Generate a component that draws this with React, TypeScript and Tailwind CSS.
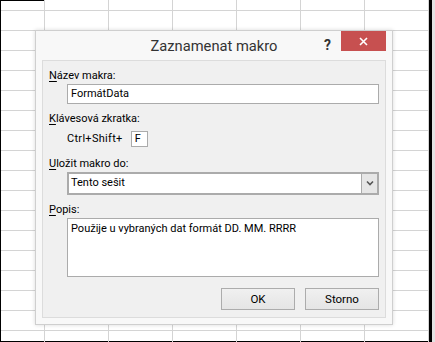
const COLS = 7
const ROWS = 17

/** Spreadsheet backdrop: a first narrow column, then 64px columns, 20px rows. */
function SheetGrid() {
  return (
    <div className="flex h-full">
      <div className="flex h-full border-l border-black">
        {Array.from({ length: COLS }).map((_, c) => (
          <div
            key={c}
            className={
              'flex h-full flex-col border-r border-[#d4d4d4] ' + (c === 0 ? 'w-[44px]' : 'w-[64px]')
            }
          >
            <div className={'h-[11px] shrink-0 border-b border-[#d4d4d4] ' + (c === 0 ? 'border-t border-t-black' : '')} />
            {Array.from({ length: ROWS - 1 }).map((_, r) => (
              <div key={r} className="h-[20px] shrink-0 border-b border-[#d4d4d4]" />
            ))}
            <div className="h-[10px] shrink-0" />
            <div className="h-[2px] shrink-0 bg-black" />
          </div>
        ))}
      </div>
      <div className="flex h-full">
        <div className="h-full w-[3px] bg-black" />
        <div className="h-full w-[3px] bg-[#e2e2e2]" />
      </div>
    </div>
  )
}

function Label({ hot, rest }: { hot: string; rest: string }) {
  return (
    <div className="h-[16px] leading-[16px] text-black">
      <span className="underline underline-offset-2">{hot}</span>
      {rest}
    </div>
  )
}

function Button({ children }: { children: React.ReactNode }) {
  return (
    <button
      type="button"
      className="h-[22px] w-[74px] border border-[#acacac] bg-gradient-to-b from-[#f0f0f0] to-[#e5e5e5] text-[11.5px] leading-[20px] text-black"
    >
      {children}
    </button>
  )
}

export default function App() {
  return (
    <div className="relative h-[342px] w-[435px] overflow-hidden bg-white font-['Roboto',sans-serif] text-[11px]">
      <SheetGrid />

      {/* Record macro dialog floating over the sheet */}
      <div className="absolute left-[35px] top-[30px] flex h-[295px] w-[358px] flex-col border border-[#cfcfcf] bg-[#f8f8f8] shadow-[0_0_4px_rgba(0,0,0,0.15)]">
        <div className="relative flex h-[29px] shrink-0 items-center justify-center">
          <span className="pt-[2px] text-[14.7px] text-[#333]">Zaznamenat makro</span>
          <span className="absolute left-[288px] top-[4px] text-[14px] font-bold text-[#333]">?</span>
          <div className="absolute right-[6px] top-0 flex h-[20px] w-[45px] items-center justify-center bg-[#c75050]">
            <svg width="9" height="9" viewBox="0 0 9 9">
              <path d="M1 1 8 8M8 1 1 8" stroke="#fff" strokeWidth="1.6" />
            </svg>
          </div>
        </div>

        <div className="mx-[6px] mb-[6px] flex flex-1 flex-col border border-[#dcdcdc] bg-[#f0f0f0] pl-[6px] pr-[6px] pt-[7px]">
          <Label hot="N" rest="ázev makra:" />
          <div className="ml-[18px] flex h-[20px] items-center border border-[#ababab] bg-white pl-[3px] text-black">
            FormátData
          </div>

          <div className="mt-[7px]">
            <Label hot="K" rest="lávesová zkratka:" />
          </div>
          <div className="ml-[18px] mt-[4px] flex items-center gap-[8px] text-black">
            <span className="tracking-[0.3px]">Ctrl+Shift+</span>
            <div className="flex h-[16px] w-[17px] items-center border border-[#ababab] bg-white pl-[3px]">F</div>
          </div>

          <div className="mt-[8px]">
            <Label hot="U" rest="ložit makro do:" />
          </div>
          <div className="ml-[18px] flex h-[23px] items-stretch border-2 border-[#ababab] bg-white text-black">
            <div className="flex flex-1 items-center pl-[2px]">Tento sešit</div>
            <div className="flex w-[16px] items-center justify-center border-l border-[#ababab] bg-[#e6e6e6]">
              <svg width="8" height="6" viewBox="0 0 8 6">
                <path d="M1 1.5 4 4.5 7 1.5" fill="none" stroke="#555" strokeWidth="1.6" />
              </svg>
            </div>
          </div>

          <div className="mt-[7px]">
            <Label hot="P" rest="opis:" />
          </div>
          <div className="ml-[18px] h-[59px] border border-[#ababab] bg-white pl-[3px] pt-[2px] text-black">
            Použije u vybraných dat formát DD. MM. RRRR
          </div>

          <div className="mt-[11px] flex justify-end gap-[10px]">
            <Button>OK</Button>
            <Button>Storno</Button>
          </div>
        </div>
      </div>
    </div>
  )
}
